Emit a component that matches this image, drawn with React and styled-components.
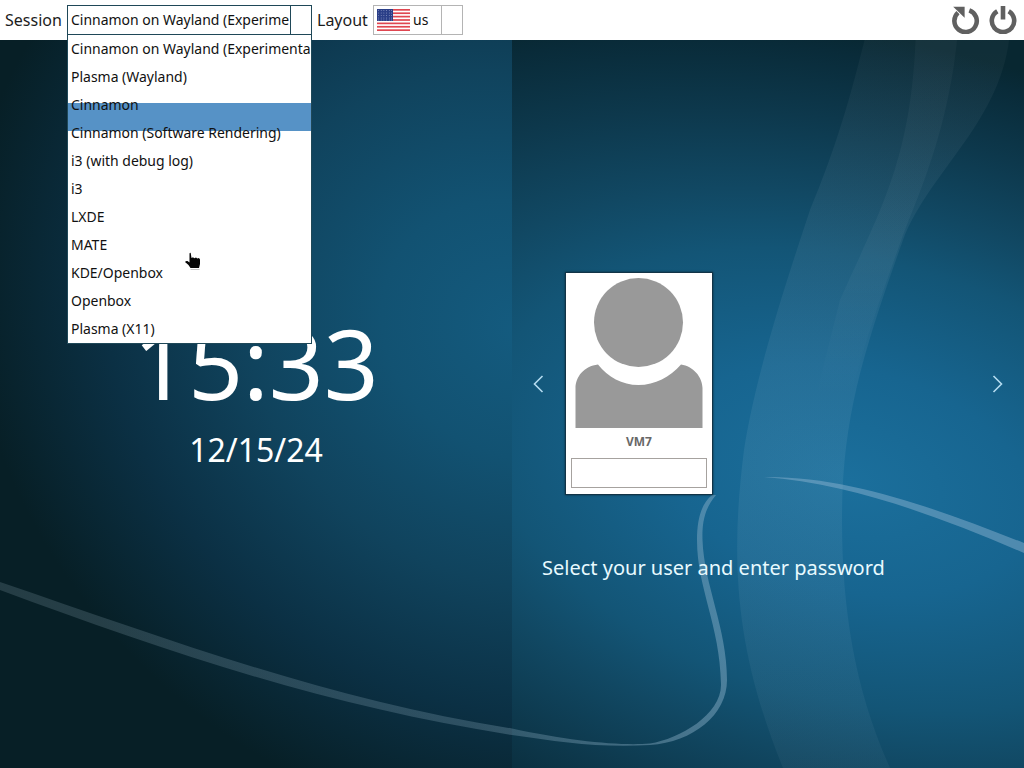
import { createGlobalStyle, styled } from 'styled-components';

const sessions = [
    'Cinnamon on Wayland (Experimental)',
    'Plasma (Wayland)',
    'Cinnamon',
    'Cinnamon (Software Rendering)',
    'i3 (with debug log)',
    'i3',
    'LXDE',
    'MATE',
    'KDE/Openbox',
    'Openbox',
    'Plasma (X11)',
];

const Wallpaper = () => (
    <WallpaperSvg viewBox="0 0 1024 768" preserveAspectRatio="none">
        <defs>
            <radialGradient id="glow" gradientUnits="userSpaceOnUse" cx="0" cy="0" r="1" gradientTransform="translate(850 480) rotate(14) scale(740 440)">
                <stop offset="0" stopColor="#1b6f9c" />
                <stop offset="0.25" stopColor="#176590" />
                <stop offset="0.5" stopColor="#135576" />
                <stop offset="0.63" stopColor="#114863" />
                <stop offset="0.8" stopColor="#0d384c" />
                <stop offset="0.95" stopColor="#092b39" />
                <stop offset="1" stopColor="#082731" />
            </radialGradient>
            <radialGradient id="leftGlow" gradientUnits="userSpaceOnUse" cx="0" cy="0" r="1" gradientTransform="translate(520 330) rotate(30) scale(570 500)">
                <stop offset="0" stopColor="#145b7f" />
                <stop offset="0.25" stopColor="#125272" />
                <stop offset="0.5" stopColor="#10435d" />
                <stop offset="0.75" stopColor="#0b3044" />
                <stop offset="1" stopColor="#071f26" />
            </radialGradient>
            <linearGradient id="band" gradientUnits="userSpaceOnUse" x1="0" y1="30" x2="0" y2="768">
                <stop offset="0" stopColor="#fff" stopOpacity="0.03" />
                <stop offset="0.35" stopColor="#bcd" stopOpacity="0.08" />
                <stop offset="0.6" stopColor="#acd" stopOpacity="0.1" />
                <stop offset="1" stopColor="#bcd" stopOpacity="0.05" />
            </linearGradient>
            <linearGradient id="stripe" gradientUnits="userSpaceOnUse" x1="0" y1="30" x2="0" y2="400">
                <stop offset="0" stopColor="#fff" stopOpacity="0.03" />
                <stop offset="0.6" stopColor="#fff" stopOpacity="0.04" />
                <stop offset="1" stopColor="#fff" stopOpacity="0" />
            </linearGradient>
            <linearGradient id="ribbon" gradientUnits="userSpaceOnUse" x1="0" y1="0" x2="727" y2="0">
                <stop offset="0" stopColor="#9ab4c0" stopOpacity="0.2" />
                <stop offset="0.65" stopColor="#92b2c4" stopOpacity="0.26" />
                <stop offset="1" stopColor="#8fb4cc" stopOpacity="0.46" />
            </linearGradient>
        </defs>
        <rect width="1024" height="768" fill="url(#glow)" />
        <rect width="512" height="768" fill="url(#leftGlow)" />
        <path d="M867 30C850 100 835 150 810 210C780 300 755 380 744 450C730 560 735 650 783 768H890C855 690 842 610 842 520C842 420 862 355 903 240C930 170 1004 120 1010 30Z" fill="url(#band)" />
        <path d="M916 30C912 160 880 210 840 300L815 400H850C865 340 880 300 903 235C925 180 950 120 958 30Z" fill="url(#stripe)" />
        <path d="M0 582C170 640 330 700 512 728.500C570 741 620 746 650 743.500C680 739 722 714 721 684C720 625 697 588 697 540C697 518 702 503 712 495H716C704 509 702 524 702.500 540C704 585 727 628 727 680C727 715 693 742 650 745C600 748 560 742 512 735C330 707 170 653 0 590Z" fill="url(#ribbon)" />
        <path d="M764 477C850 476 940 510 1024 543V553C940 517 850 483 764 477Z" fill="#8cb4d0" fillOpacity="0.48" />
    </WallpaperSvg>
);

const Flag = () => (
    <FlagSvg viewBox="0 0 33 22">
        <rect width="33" height="22" fill="#fff" />
        {[0, 2, 4, 6, 8, 10, 12].map((n) => (
            <rect key={n} y={n * 22 / 13} width="33" height={22 / 13} fill="#df4650" />
        ))}
        <rect width="16" height="12" fill="#2b3f88" />
        {[1.5, 4, 6.5, 9, 11].map((y, row) => (
            [1.5, 4.2, 6.9, 9.6, 12.3, 14.6].map((x) => (
                <circle key={`${row}-${x}`} cx={x} cy={y} r="0.45" fill="#b4bcdc" />
            ))
        ))}
    </FlagSvg>
);

const Restart = () => (
    <PowerIcon viewBox="0 0 28 28">
        <path d="M17.3 4.3A11.2 11.2 0 1 1 6 6.6" fill="none" stroke="#606060" strokeWidth="4.6" />
        <path d="M1.2 0.8H12.6V11.8Z" fill="#606060" />
    </PowerIcon>
);

const Shutdown = () => (
    <PowerIcon viewBox="0 0 28 28">
        <path d="M8.3 5.2A11.2 11.2 0 1 0 19.7 5.2" fill="none" stroke="#606060" strokeWidth="4.6" />
        <path d="M14 0V13.5" stroke="#606060" strokeWidth="4.6" />
    </PowerIcon>
);

const Avatar = () => (
    <AvatarSvg viewBox="0 0 128 150">
        <circle cx="63.5" cy="44.5" r="44.5" fill="#999" />
        <path d="M0.5 150V110C0.5 99 9 88 23 86.5C33 99 47 107 63.5 107C80 107 95 99 106 86.5C118 88 127.5 99 127.5 110V150Z" fill="#999" />
    </AvatarSvg>
);

const Arrow = ({ right }) => (
    <ArrowSvg viewBox="0 0 12 18">
        <path d={right ? 'M1.5 1L9.5 9L1.5 17' : 'M10.5 1L2.5 9L10.5 17'} fill="none" stroke="#b5dcf0" strokeWidth="1.6" />
    </ArrowSvg>
);

const Pointer = () => (
    <PointerSvg viewBox="0 0 18 20">
        <path d="M4.500 1.500Q5 0.500 5.700 1L6.500 6L8 5.300L9.300 6.200L11 5.500L12.300 6.500L14 6L15 7.500V12L14 16H5.500L3.500 13L0 10Q1 8.500 2.500 9L4.500 10.500Z" fill="#050505" />
        <path d="M5.5 17.500H14.500" stroke="#c8c8c8" />
    </PointerSvg>
);

const App = () => {
    return (
        <>
        <GlobalStyle />
        <Screen>
            <Wallpaper />
            <TopBar>
                <Label>Session</Label>
                <Combo $open>
                    <ComboText $width={222}>Cinnamon on Wayland (Experime</ComboText>
                    <ComboButton $open />
                    <Menu>
                        <Highlight />
                        {sessions.map((name) => <MenuItem key={name}>{name}</MenuItem>)}
                    </Menu>
                </Combo>
                <Label $gap>Layout</Label>
                <Combo>
                    <ComboText $width={67}><Flag />us</ComboText>
                    <ComboButton />
                </Combo>
                <PowerButtons>
                    <Restart />
                    <Shutdown />
                </PowerButtons>
            </TopBar>
            <Panels>
                <ClockPanel>
                    <Time>15:33</Time>
                    <Day>12/15/24</Day>
                </ClockPanel>
                <LoginPanel>
                    <UserRow>
                        <Arrow />
                        <UserCard>
                            <Avatar />
                            <UserName>VM7</UserName>
                            <Password type="password" />
                        </UserCard>
                        <Arrow right />
                    </UserRow>
                    <Prompt>Select your user and enter password</Prompt>
                </LoginPanel>
            </Panels>
            <Pointer />
        </Screen>
        </>
    );
}

const GlobalStyle = createGlobalStyle`
* { box-sizing: border-box; }
body {
    margin: 0;
    overflow: hidden;
    font-family: "Noto Sans", sans-serif;
}
`;

const Screen = styled.div`
position: relative;
width: 1024px;
height: 768px;
display: flex;
flex-direction: column;
overflow: hidden;
background: #0b3448;
`;

const WallpaperSvg = styled.svg`
position: absolute;
inset: 0;
width: 100%;
height: 100%;
`;

const TopBar = styled.div`
position: relative;
z-index: 2;
height: 40px;
flex: none;
display: flex;
align-items: center;
padding: 0 7px 0 5px;
background: #fff;
`;

const Label = styled.span`
font-size: 16px;
line-height: 22px;
color: #1c1c1c;
width: ${({ $gap }) => ($gap ? '56px' : '62px')};
margin-left: ${({ $gap }) => ($gap ? '5px' : '0')};
white-space: nowrap;
`;

const Combo = styled.div`
position: relative;
height: 30px;
display: flex;
border: 1px solid ${({ $open }) => ($open ? '#1f4858' : '#b4b4b4')};
`;

const ComboText = styled.div`
width: ${({ $width }) => $width}px;
display: flex;
align-items: center;
padding: 0 0 1px 3px;
overflow: hidden;
white-space: nowrap;
font-size: 13.97px;
color: #111;
`;

const ComboButton = styled.div`
width: 21px;
border-left: 1px solid ${({ $open }) => ($open ? '#1f4858' : '#b4b4b4')};
`;

const Menu = styled.div`
position: absolute;
top: 28px;
left: -1px;
width: 245px;
height: 310px;
border: 1px solid #1f4858;
background: #fff;
overflow: hidden;
`;

const Highlight = styled.div`
position: absolute;
top: 68px;
left: 0;
width: 100%;
height: 28px;
background: #5692c6;
`;

const MenuItem = styled.div`
position: relative;
height: 28px;
line-height: 28px;
padding-left: 3px;
font-size: 13.97px;
color: #111;
white-space: nowrap;
`;

const FlagSvg = styled.svg`
width: 33px;
height: 22px;
margin: 1px 3px 0 0;
`;

const PowerButtons = styled.div`
margin-left: auto;
display: flex;
gap: 9px;
`;

const PowerIcon = styled.svg`
width: 28px;
height: 28px;
`;

const Panels = styled.div`
position: relative;
flex: 1;
display: grid;
grid-template-columns: 1fr 1fr;
color: #fff;
`;

const ClockPanel = styled.div`
padding-top: 263px;
display: flex;
flex-direction: column;
align-items: center;
`;

const Time = styled.div`
font-size: 96px;
line-height: 120px;
`;

const Day = styled.div`
font-size: 32px;
line-height: 36px;
margin-top: 9px;
`;

const LoginPanel = styled.div`
padding: 232px 20px 0;
`;

const UserRow = styled.div`
display: flex;
align-items: center;
height: 223px;

& > svg:last-child { margin-left: auto; }
`;

const ArrowSvg = styled.svg`
width: 12px;
height: 18px;
`;

const UserCard = styled.div`
width: 148px;
height: 223px;
margin-left: 21px;
display: flex;
flex-direction: column;
align-items: center;
padding-top: 5px;
background: #fff;
border: 1px solid #123447;
box-shadow: 0 0 2px #0b2b3a;
`;

const AvatarSvg = styled.svg`
width: 128px;
height: 150px;
`;

const UserName = styled.div`
font-size: 12px;
font-weight: 700;
line-height: 18px;
margin-top: 5px;
color: #686868;
`;

const Password = styled.input`
width: 136px;
height: 30px;
margin-top: 7px;
border: 1px solid #a6a29f;
background: #fff;
outline: none;
`;

const Prompt = styled.div`
margin: 59px 0 0 10px;
font-size: 20px;
line-height: 28px;
color: #e8faff;
white-space: nowrap;
`;

const PointerSvg = styled.svg`
position: absolute;
z-index: 3;
left: 185px;
top: 252px;
width: 18px;
height: 20px;
`;

export default App;
